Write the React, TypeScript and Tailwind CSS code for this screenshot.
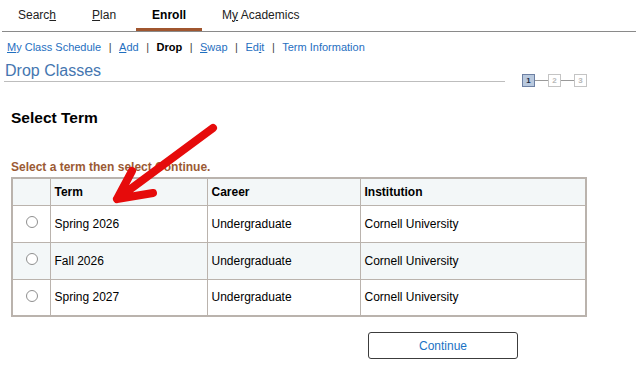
import React from "react";

const terms = [
  { term: "Spring 2026", career: "Undergraduate", institution: "Cornell University" },
  { term: "Fall 2026", career: "Undergraduate", institution: "Cornell University" },
  { term: "Spring 2027", career: "Undergraduate", institution: "Cornell University" },
];

function Tab({ children, active }: { children: React.ReactNode; active?: boolean }) {
  return (
    <div
      className={
        "flex h-[31px] items-center px-4 pt-[1px] text-[12px] " +
        (active ? "border-b-[3px] border-[#a0562f] font-bold text-black" : "border-b-[3px] border-transparent text-[#222]")
      }
    >
      <span>{children}</span>
    </div>
  );
}

function Sep() {
  return <span className="mx-[7.5px] text-[#444]">|</span>;
}

function Step({ n, active }: { n: number; active?: boolean }) {
  return (
    <div
      className={
        "flex h-[13px] w-[13px] items-center justify-center border text-[8px] font-bold leading-none " +
        (active
          ? "border-[#6d80a3] bg-[#b9c9de] text-[#1d2a44]"
          : "border-[#c4c4c4] bg-white text-[#b8b8b8]")
      }
    >
      {n}
    </div>
  );
}

export default function App() {
  return (
    <div
      className="relative h-[372px] w-[644px] overflow-hidden bg-white"
      style={{ fontFamily: '"Liberation Sans", Arial, sans-serif' }}
    >
      {/* top tabs */}
      <div className="ml-[2px] mr-[8px] flex gap-[4px] border-b border-[#8a8a8a]">
        <Tab>
          Searc<span className="underline">h</span>
        </Tab>
        <Tab>
          <span className="underline">P</span>lan
        </Tab>
        <Tab active>Enroll</Tab>
        <Tab>
          M<span className="underline">y</span> Academics
        </Tab>
      </div>

      {/* sub nav */}
      <div className="mt-[8px] flex pl-[7px] text-[11px] leading-[14px] text-[#1f6fbf]">
        <span>
          <span className="underline">M</span>y Class Schedule
        </span>
        <Sep />
        <span>
          <span className="underline">A</span>dd
        </span>
        <Sep />
        <span className="font-bold text-black">Drop</span>
        <Sep />
        <span>
          <span className="underline">S</span>wap
        </span>
        <Sep />
        <span>
          Ed<span className="underline">i</span>t
        </span>
        <Sep />
        <span>Term Information</span>
      </div>

      {/* title row */}
      <div className="mt-[8px] flex items-end pl-[4px]">
        <div className="w-[501px] border-b border-[#bdbdbd] pb-[1px] pl-[1px] text-[16px] leading-[18px] text-[#4476b0]">
          Drop Classes
        </div>
        <div className="mb-[-5px] ml-[17px] flex items-center">
          <Step n={1} active />
          <div className="h-px w-[13px] bg-[#9a9a9a]" />
          <Step n={2} />
          <div className="h-px w-[13px] bg-[#9a9a9a]" />
          <Step n={3} />
        </div>
      </div>

      <div className="pl-[11px]">
        <div className="mt-[27px] text-[15.5px] font-bold leading-[18px] text-black">Select Term</div>
        <div className="mt-[33px] text-[12px] font-bold leading-[14px] text-[#9b5a34]">
          Select a term then select Continue.
        </div>

        <table className="mt-[3px] w-[576px] border-collapse border-2 border-[#bab3ad] text-[12px] text-black">
          <thead>
            <tr className="h-[27px] bg-[#f3f7f8]">
              <th className="w-[38px] border border-[#bab3ad]" />
              <th className="w-[157px] border border-[#bab3ad] pl-[4px] text-left font-bold">Term</th>
              <th className="w-[153px] border border-[#bab3ad] pl-[4px] text-left font-bold">Career</th>
              <th className="border border-[#bab3ad] pl-[4px] text-left font-bold">Institution</th>
            </tr>
          </thead>
          <tbody>
            {terms.map((t, i) => (
              <tr key={t.term} className={"h-[37px] " + (i % 2 === 1 ? "bg-[#f3f7f8]" : "bg-white")}>
                <td className="border border-[#bab3ad]">
                  <div className="mb-[3px] ml-[13px] h-[12px] w-[12px] rounded-full border border-[#8f8f8f] bg-white" />
                </td>
                <td className="border border-[#bab3ad] pl-[4px]">{t.term}</td>
                <td className="border border-[#bab3ad] pl-[4px]">{t.career}</td>
                <td className="border border-[#bab3ad] pl-[4px]">{t.institution}</td>
              </tr>
            ))}
          </tbody>
        </table>

        <div className="mt-[15px] flex pl-[357px]">
          <button className="h-[27px] w-[150px] rounded-[3px] border border-[#3c3c3c] bg-white text-[12px] text-[#1a72c4]">
            Continue
          </button>
        </div>
      </div>

      {/* red annotation arrow */}
      <svg className="pointer-events-none absolute left-0 top-0" width="644" height="372">
        <path
          d="M213 128 L117 199 M132 171 L117 199 L153 193"
          fill="none"
          stroke="#e60b0b"
          strokeWidth="8"
          strokeLinecap="round"
          strokeLinejoin="round"
        />
      </svg>
    </div>
  );
}
